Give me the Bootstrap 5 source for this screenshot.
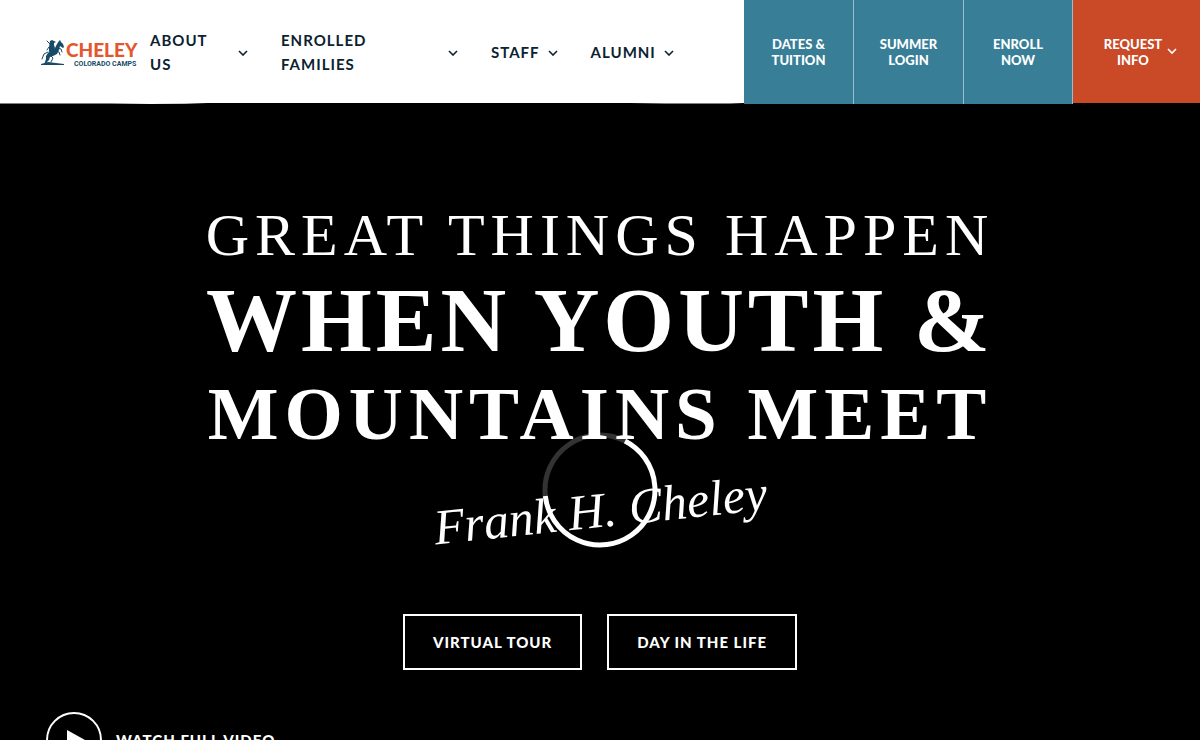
<!DOCTYPE html>
<html lang="en">
<head>
<meta charset="utf-8">
<meta name="viewport" content="width=device-width, initial-scale=1">
<title>Cheley Colorado Camps</title>
<link href="https://cdn.jsdelivr.net/npm/bootstrap@5.3.0/dist/css/bootstrap.min.css" rel="stylesheet">
<style>
  body { background: #000; font-family: Lato, "Liberation Sans", sans-serif; scrollbar-width: none; }
  body::-webkit-scrollbar { display: none; }
  .site-header { min-height: 104px; }
  .nav-panel { background: #fff; padding-left: 40px; }
  .header-edge { left: 0; bottom: 0; width: 100%; height: 2px; }
  .logo-link { width: 100px; height: 28px; margin-right: 10px; }
  .main-menu { gap: 32px; }
  .main-menu .nav-link { color: #0b2230; font-weight: 700; font-size: 15px; line-height: 24px; letter-spacing: 1px; gap: 7px; }
  .item-about { width: 99px; }
  .item-families { width: 178px; }
  .cta { width: 110px; color: #fff; background: #387e97; font-weight: 900; font-size: 13px; line-height: 16px; border-right: 1px solid #9bbecb; }
  .cta:hover { color: #fff; }
  .cta-enroll { width: 109px; }
  .cta-info { width: 127px; background: #ca4927; border: 0; border-bottom: 1px solid #000; gap: 5px; padding-left: 14px; }
  .hero { color: #fff; padding-top: 95px; }
  .quote { font-family: "Liberation Serif", serif; text-transform: uppercase; white-space: nowrap; }
  .line-one { font-size: 60px; line-height: 72px; letter-spacing: 6px; }
  .line-two { font-size: 91px; line-height: 100px; letter-spacing: 4px; font-weight: 700; }
  .line-three { font-size: 75px; line-height: 86px; letter-spacing: 6px; font-weight: 700; }
  .signature { font-family: "Liberation Serif", serif; font-style: italic; font-size: 50px; line-height: 60px; margin-top: 23px; }
  .signature-text { transform: rotate(-6deg); }
  .spinner-ring { width: 116px; height: 116px; left: calc(50% - 58px); bottom: -8px; }
  .hero-actions { gap: 25px; margin-top: 74px; }
  .btn-hero { color: #fff; border: 2px solid #fff; border-radius: 0; font-weight: 900; font-size: 15px; line-height: 24px; padding: 14px 28px; letter-spacing: 1px; }
  .btn-hero:hover { background: #fff; color: #000; }
  .watch { margin: 42px 46px 40px; color: #fff; gap: 14px; font-weight: 900; font-size: 15px; letter-spacing: 1px; }
</style>
</head>
<body>
<header class="site-header d-flex">
  <nav class="nav-panel position-relative d-flex align-items-center flex-grow-1" aria-label="Main">
    <a class="logo-link d-block flex-shrink-0" href="#" aria-label="Cheley Colorado Camps">
      <svg class="d-block overflow-visible" width="100" height="30" viewBox="0 0 100 30">
        <g fill="#194b68" stroke="#194b68" stroke-linejoin="round" stroke-linecap="round">
          <path stroke="none" d="M8 15l3-3 4-2 2-4 2-3 1-1 1 2 2 2 1 3-1 1-3-2-1 4-2 4-4 2-3 1-1 3-2 2-1 3-2 0 2-6 0-3z"/>
          <path stroke="none" d="M10 3l2-1 2 1 2 1-2 1 0 2 1 3-2 3-2 3-2-3 0-4z"/>
          <path fill="none" stroke-width="1" d="M17 10l4 1 1 3M15 13l4 1 1 3M10 17l3 3-2 4M8 14l-4 2-2 5M10 6L7 3M9 9l-2 3"/>
          <path stroke="none" d="M1 26l7-2 8 1 8 1v1H1z"/>
        </g>
        <text x="26" y="19" font-family="Lato, sans-serif" font-weight="900" font-size="19" fill="#e4572e">CHELEY</text>
        <text x="34" y="28" font-family="'Liberation Sans Narrow', Roboto, sans-serif" font-weight="700" font-size="7" fill="#194b68">COLORADO CAMPS</text>
      </svg>
    </a>
    <ul class="main-menu nav flex-nowrap align-items-center">
      <li class="item-about"><a class="nav-link p-0 d-flex align-items-center justify-content-between" href="#">ABOUT US
        <svg class="flex-shrink-0" width="12" height="8" viewBox="0 0 12 8" fill="none" stroke="currentColor" stroke-width="1.6"><path d="M2 3l4 4 4-4"/></svg></a></li>
      <li class="item-families"><a class="nav-link p-0 d-flex align-items-center justify-content-between" href="#">ENROLLED FAMILIES
        <svg class="flex-shrink-0" width="12" height="8" viewBox="0 0 12 8" fill="none" stroke="currentColor" stroke-width="1.6"><path d="M2 3l4 4 4-4"/></svg></a></li>
      <li><a class="nav-link p-0 d-flex align-items-center" href="#">STAFF
        <svg width="12" height="8" viewBox="0 0 12 8" fill="none" stroke="currentColor" stroke-width="1.6"><path d="M2 3l4 4 4-4"/></svg></a></li>
      <li><a class="nav-link p-0 d-flex align-items-center" href="#">ALUMNI
        <svg width="12" height="8" viewBox="0 0 12 8" fill="none" stroke="currentColor" stroke-width="1.6"><path d="M2 3l4 4 4-4"/></svg></a></li>
    </ul>
    <svg class="header-edge position-absolute" viewBox="0 0 744 2" preserveAspectRatio="none"><path d="M0 2V1.5H110L150 2 185 1.7 208 1H630L665 1.5H730L744 1V2z"/></svg>
  </nav>
  <div class="d-flex flex-shrink-0 text-center">
    <a class="cta d-flex align-items-center justify-content-center text-decoration-none" href="#">DATES &amp;<br>TUITION</a>
    <a class="cta d-flex align-items-center justify-content-center text-decoration-none" href="#">SUMMER<br>LOGIN</a>
    <a class="cta cta-enroll d-flex align-items-center justify-content-center text-decoration-none" href="#">ENROLL<br>NOW</a>
    <button class="cta cta-info d-flex align-items-center justify-content-center" type="button"><span>REQUEST<br>INFO</span>
      <svg width="10" height="7" viewBox="0 0 10 7" fill="none" stroke="currentColor" stroke-width="1.6"><path d="M1 1l4 4 4-4"/></svg></button>
  </div>
</header>
<main class="hero">
  <div class="text-center">
    <h1 class="quote m-0">
      <span class="line-one d-block fw-normal">Great things happen</span>
      <span class="line-two d-block">When youth &amp;</span>
      <span class="line-three d-block">Mountains meet</span>
    </h1>
    <div class="signature position-relative">
      <span class="signature-text d-inline-block">Frank H. Cheley</span>
      <svg class="spinner-ring position-absolute" viewBox="0 0 116 116" fill="none" stroke="#fff" stroke-width="5" role="img" aria-label="Loading">
        <path stroke-opacity=".2" d="M3.3 64A55 55 0 0 1 83 9"/>
        <path d="M83 9A55 55 0 1 1 3.3 64"/>
      </svg>
    </div>
  </div>
  <div class="hero-actions d-flex justify-content-center">
    <button class="btn btn-hero" type="button">VIRTUAL TOUR</button>
    <button class="btn btn-hero" type="button">DAY IN THE LIFE</button>
  </div>
  <a class="watch d-inline-flex align-items-center text-decoration-none" href="#">
    <svg width="56" height="56" viewBox="0 0 56 56"><circle cx="28" cy="28" r="27" fill="none" stroke="#fff" stroke-width="2"/><path fill="#fff" d="M21 18l18 10-18 10z"/></svg>
    WATCH FULL VIDEO
  </a>
</main>
<script src="https://cdn.jsdelivr.net/npm/bootstrap@5.3.0/dist/js/bootstrap.bundle.min.js"></script>
</body>
</html>
